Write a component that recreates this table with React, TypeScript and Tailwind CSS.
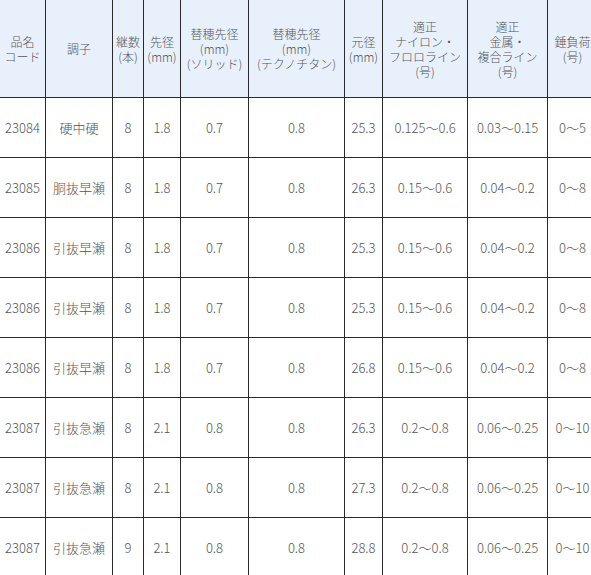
import React from "react";

const cols = "grid-cols-[46px_67px_31px_37px_68px_96px_38px_85px_80px_50px]";

const headers: string[][] = [
  ["品名", "コード"],
  ["調子"],
  ["継数", "(本)"],
  ["先径", "(mm)"],
  ["替穂先径", "(mm)", "(ソリッド)"],
  ["替穂先径", "(mm)", "(テクノチタン)"],
  ["元径", "(mm)"],
  ["適正", "ナイロン・", "フロロライン", "(号)"],
  ["適正", "金属・", "複合ライン", "(号)"],
  ["錘負荷", "(号)"],
];

const rows: string[][] = [
  ["23084", "硬中硬", "8", "1.8", "0.7", "0.8", "25.3", "0.125～0.6", "0.03～0.15", "0～5"],
  ["23085", "胴抜早瀬", "8", "1.8", "0.7", "0.8", "26.3", "0.15～0.6", "0.04～0.2", "0～8"],
  ["23086", "引抜早瀬", "8", "1.8", "0.7", "0.8", "25.3", "0.15～0.6", "0.04～0.2", "0～8"],
  ["23086", "引抜早瀬", "8", "1.8", "0.7", "0.8", "25.3", "0.15～0.6", "0.04～0.2", "0～8"],
  ["23086", "引抜早瀬", "8", "1.8", "0.7", "0.8", "26.8", "0.15～0.6", "0.04～0.2", "0～8"],
  ["23087", "引抜急瀬", "8", "2.1", "0.8", "0.8", "26.3", "0.2～0.8", "0.06～0.25", "0～10"],
  ["23087", "引抜急瀬", "8", "2.1", "0.8", "0.8", "27.3", "0.2～0.8", "0.06～0.25", "0～10"],
  ["23087", "引抜急瀬", "9", "2.1", "0.8", "0.8", "28.8", "0.2～0.8", "0.06～0.25", "0～10"],
];

export default function App() {
  return (
    <div
      className="w-[591px] h-[575px] overflow-hidden bg-white text-[#555]"
      style={{ fontFamily: '"Noto Sans CJK JP", "Noto Sans", sans-serif' }}
    >
      <div className={`grid ${cols} w-[598px]`}>
        {headers.map((lines, i) => (
          <div
            key={"h" + i}
            className="h-[98px] bg-[#e8f0fc] border-r border-b border-[#2a2a2a] flex flex-col items-center justify-center text-[12px] leading-[15px] font-light whitespace-nowrap"
          >
            {lines.map((l, j) => (
              <span key={j}>{l}</span>
            ))}
          </div>
        ))}
        {rows.map((r, ri) =>
          r.map((c, ci) => (
            <div
              key={ri + "-" + ci}
              className={`h-[60px] border-r border-[#2a2a2a] ${ri < rows.length - 1 ? "border-b" : ""} flex items-center justify-center text-[13px] font-light whitespace-nowrap`}
            >
              {c}
            </div>
          ))
        )}
      </div>
    </div>
  );
}
